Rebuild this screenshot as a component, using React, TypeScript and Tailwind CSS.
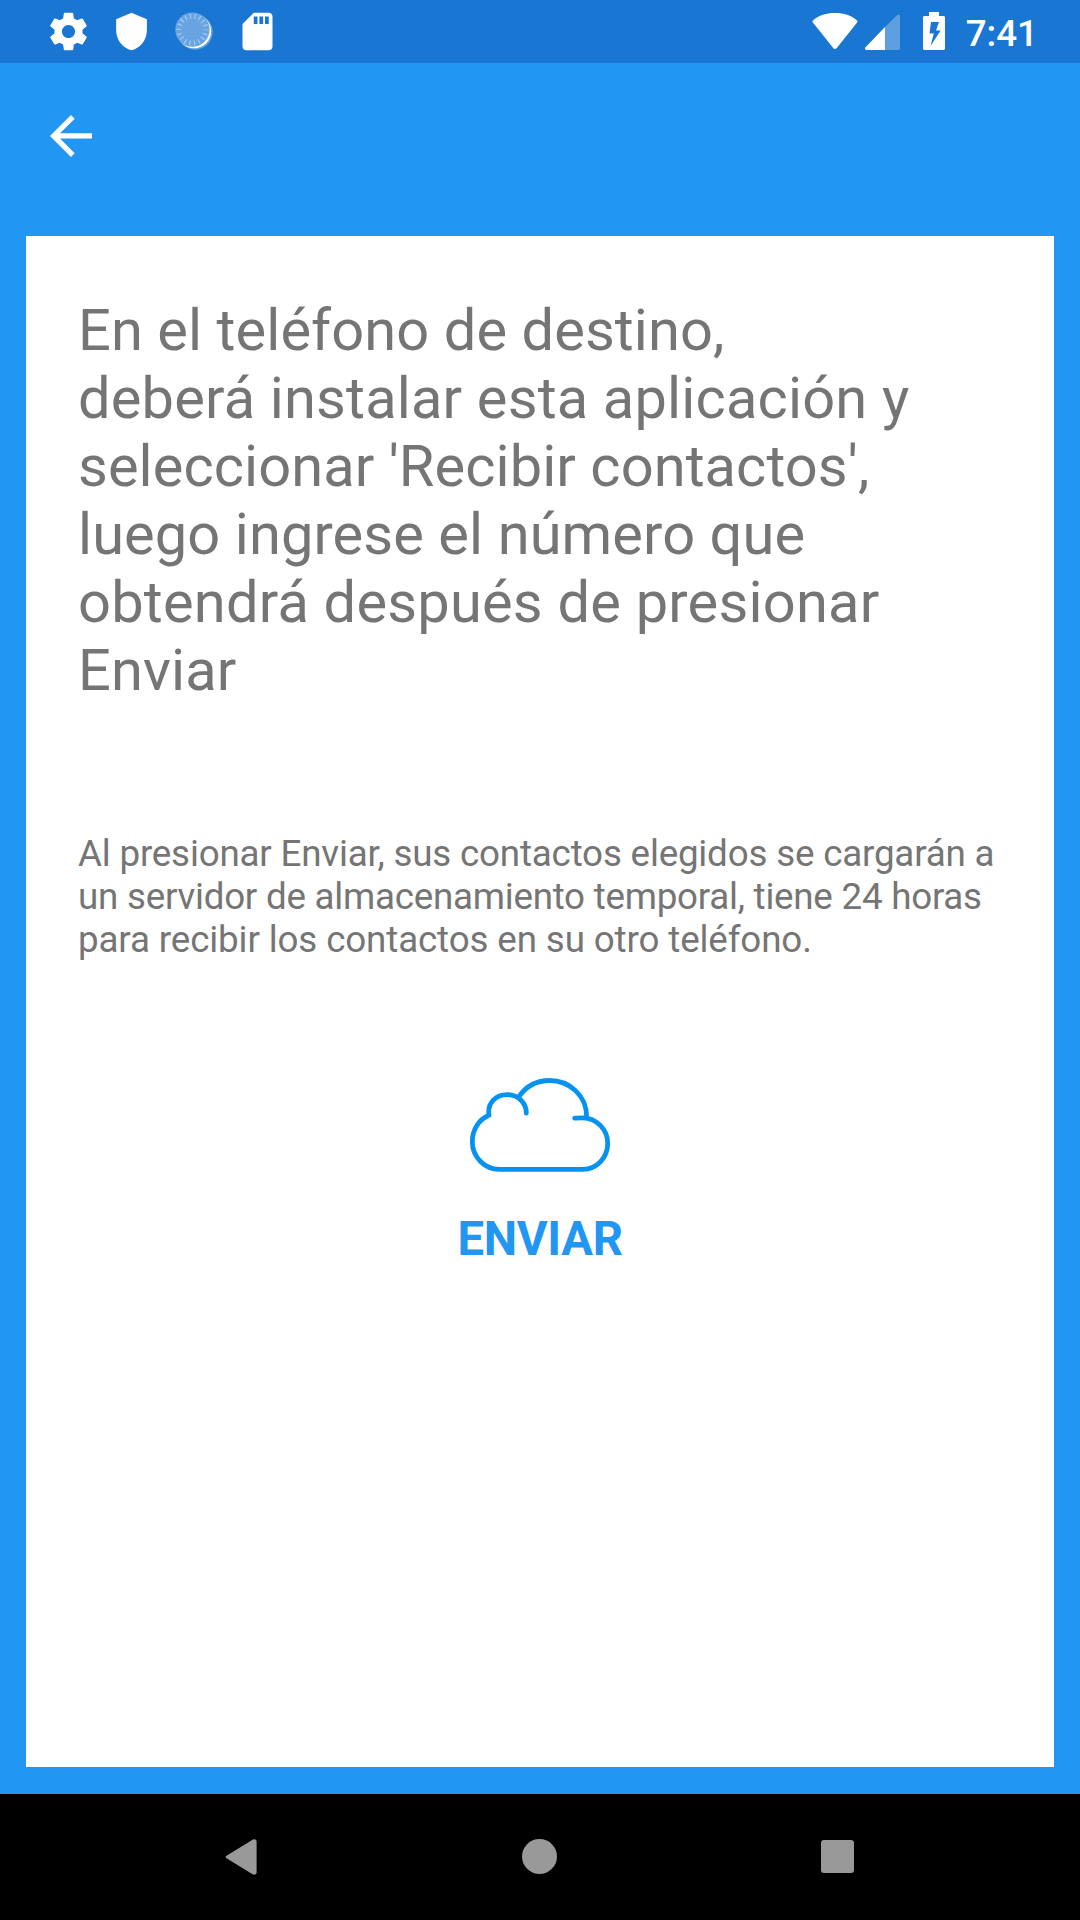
function StatusBar() {
  return (
    <div className="flex h-[63px] shrink-0 items-start justify-between bg-[#1976d2] pl-[46px] pr-[42px] text-white">
      {/* Notifications */}
      <div className="flex gap-[18px] pt-[9px]">
        <svg className="h-[45px] w-[45px]" viewBox="0 0 24 24" fill="currentColor">
          <path d="M19.43 12.98c.04-.32.07-.64.07-.98s-.03-.66-.07-.98l2.11-1.65c.19-.15.24-.42.12-.64l-2-3.46c-.12-.22-.39-.3-.61-.22l-2.49 1c-.52-.4-1.08-.73-1.69-.98l-.38-2.65C14.46 2.18 14.25 2 14 2h-4c-.25 0-.46.18-.49.42l-.38 2.65c-.61.25-1.17.59-1.69.98l-2.49-1c-.23-.09-.49 0-.61.22l-2 3.46c-.13.22-.07.49.12.64l2.11 1.65c-.04.32-.07.65-.07.98s.03.66.07.98l-2.11 1.65c-.19.15-.24.42-.12.64l2 3.46c.12.22.39.3.61.22l2.49-1c.52.4 1.08.73 1.69.98l.38 2.65c.03.24.24.42.49.42h4c.25 0 .46-.18.49-.42l.38-2.65c.61-.25 1.17-.59 1.69-.98l2.49 1c.23.09.49 0 .61-.22l2-3.46c.12-.22.07-.49-.12-.64l-2.11-1.65zM12 15.5c-1.93 0-3.5-1.57-3.5-3.5s1.57-3.5 3.5-3.5 3.5 1.57 3.5 3.5-1.57 3.5-3.5 3.5z" />
        </svg>
        <svg className="h-[45px] w-[45px]" viewBox="0 0 24 24" fill="currentColor">
          <path d="M12 2 20.2 5.5V11.2C20.2 16.4 16.8 20.9 12 22 7.2 20.9 3.8 16.4 3.8 11.2V5.5z" />
        </svg>
        <svg className="h-[45px] w-[45px]" viewBox="0 0 45 45">
          <circle cx="23" cy="23" r="17.7" fill="#fff" fillOpacity=".35" />
          <circle cx="22.1" cy="22.3" r="17" fill="#fff" />
          <circle cx="20.4" cy="20.6" r="17.2" fill="#68a4e1" />
          <circle
            cx="20.4"
            cy="20.6"
            r="13.4"
            fill="none"
            stroke="#a3c8ed"
            strokeWidth="5"
            strokeDasharray="1.2 3.478"
            strokeDashoffset="0.6"
          />
        </svg>
        <svg className="h-[45px] w-[45px]" viewBox="0 0 24 24" fill="currentColor">
          <path d="M18 2h-8L4.02 8 4 20c0 1.1.9 2 2 2h12c1.1 0 2-.9 2-2V4c0-1.1-.9-2-2-2zm-6 6h-2V4h2v4zm3 0h-2V4h2v4zm3 0h-2V4h2v4z" />
        </svg>
      </div>

      {/* System icons and clock */}
      <div className="flex">
        <svg className="h-[63px] w-[156px]" viewBox="810 0 156 63" fill="currentColor">
          <path d="M813.2 20.2C819 15.5 826 13 835 13s16 2.500 21.800 7.200c.8.700.9 1.500.3 2.300L836.600 48.200c-.9 1.100-2.300 1.100-3.200 0L812.900 22.500c-.6-.8-.5-1.600.3-2.300z" />
          <path d="M885 27v23h-18.300c-1.800 0-2.300-1.600-1.200-2.800z" />
          <path d="M885 27l12.300-11.900c1.200-1.100 2.700-.6 2.700 1.100v32c0 1.200-.6 1.800-1.800 1.800H885z" fillOpacity=".3" />
          <path
            fillRule="evenodd"
            d="M929 12h10v4h4.500c.9 0 1.500.6 1.500 1.500v31c0 .9-.6 1.500-1.500 1.500h-19c-.9 0-1.500-.6-1.500-1.500v-31c0-.9.6-1.500 1.500-1.500h4.500zM931 22l-1.500 11.500h4.300L930.500 46l10.200-15.500h-4.700l3-8.500z"
          />
        </svg>
        <span className="pt-[12px] text-[36.75px] font-medium leading-[43px]">7:41</span>
      </div>
    </div>
  );
}

function Cloud() {
  return (
    <svg
      className="h-[96px] w-[142px]"
      viewBox="469 1077 142 96"
      fill="none"
      stroke="#0693f0"
      strokeWidth="4.8"
      strokeLinecap="round"
    >
      <path d="M488.900 1115.300C479 1119.500 472.300 1129.500 472.300 1141.500C472.300 1157 484.500 1169.300 499.500 1169.300H583C597 1169.300 607.700 1157.500 607.700 1143.500C607.700 1129.500 596.500 1117.800 582.500 1117.800C579.500 1117.800 577 1117.900 574.700 1118.200" />
      <path d="M488.900 1114.500C487.400 1102.500 496 1094.600 507.200 1094.600C518.500 1094.600 526.500 1103.500 526.300 1113.200" />
      <path d="M519 1096.500C526 1086.500 537 1080.500 549.500 1080.500C570 1080.500 586.700 1096 586.700 1117" />
    </svg>
  );
}

function NavBar() {
  return (
    <div className="flex h-[126px] shrink-0 items-center bg-black pb-px pl-[223px] text-[#999]">
      <svg className="h-9 w-9" viewBox="0 0 36 36" fill="currentColor">
        <path d="M3.500 16.700 29.600.8c1.700-1 4-.2 4 1.700v31c0 1.900-2.300 2.700-4 1.700L3.500 19.300c-1.200-.7-1.200-1.900 0-2.600z" />
      </svg>
      <div className="ml-[263px] h-[35px] w-[35px] rounded-full bg-[#999]" />
      <div className="ml-[264px] h-[33px] w-[33px] rounded-[3px] bg-[#999]" />
    </div>
  );
}

export default function App() {
  return (
    <div className="flex h-[1920px] w-[1080px] flex-col overflow-hidden bg-[#2196f3] font-[Roboto,sans-serif]">
      <StatusBar />

      {/* Toolbar */}
      <header className="flex h-[147px] shrink-0 items-center pb-0.5 pl-[39px]">
        <button type="button" aria-label="Atrás">
          <svg className="block h-[63px] w-[63px]" viewBox="-0.19 -0.19 24 24" fill="#fff">
            <path d="M20 11H7.830l5.590-5.590L12 4l-8 8 8 8 1.410-1.410L7.830 13H20v-2z" />
          </svg>
        </button>
      </header>

      <main className="mx-[26px] mb-[27px] mt-[26px] flex flex-1 flex-col bg-white px-[52px] pt-[60px] text-[#757575]">
        <p className="whitespace-nowrap text-[57.75px] leading-[68px]">
          <span className="block tracking-[0.09px]">En el teléfono de destino,</span>
          <span className="block tracking-[0.19px]">deberá instalar esta aplicación y</span>
          <span className="block tracking-[0.08px]">seleccionar 'Recibir contactos',</span>
          <span className="block tracking-[0.1px]">luego ingrese el número que</span>
          <span className="block tracking-[0.23px]">obtendrá después de presionar</span>
          <span className="block tracking-[0.1px]">Enviar</span>
        </p>
        <p className="mt-[128px] whitespace-nowrap text-[36.75px] leading-[43px]">
          <span className="block tracking-[-0.19px]">
            Al presionar Enviar, sus contactos elegidos se cargarán a
          </span>
          <span className="block tracking-[-0.245px]">
            un servidor de almacenamiento temporal, tiene 24 horas
          </span>
          <span className="block tracking-[-0.13px]">
            para recibir los contactos en su otro teléfono.
          </span>
        </p>
        <button type="button" className="mt-[116px] flex flex-col items-center gap-[39px] self-center">
          <Cloud />
          <span className="text-[47.25px] font-bold leading-[55px] tracking-[-0.3px] text-[#2196f3]">ENVIAR</span>
        </button>
      </main>

      <NavBar />
    </div>
  );
}
